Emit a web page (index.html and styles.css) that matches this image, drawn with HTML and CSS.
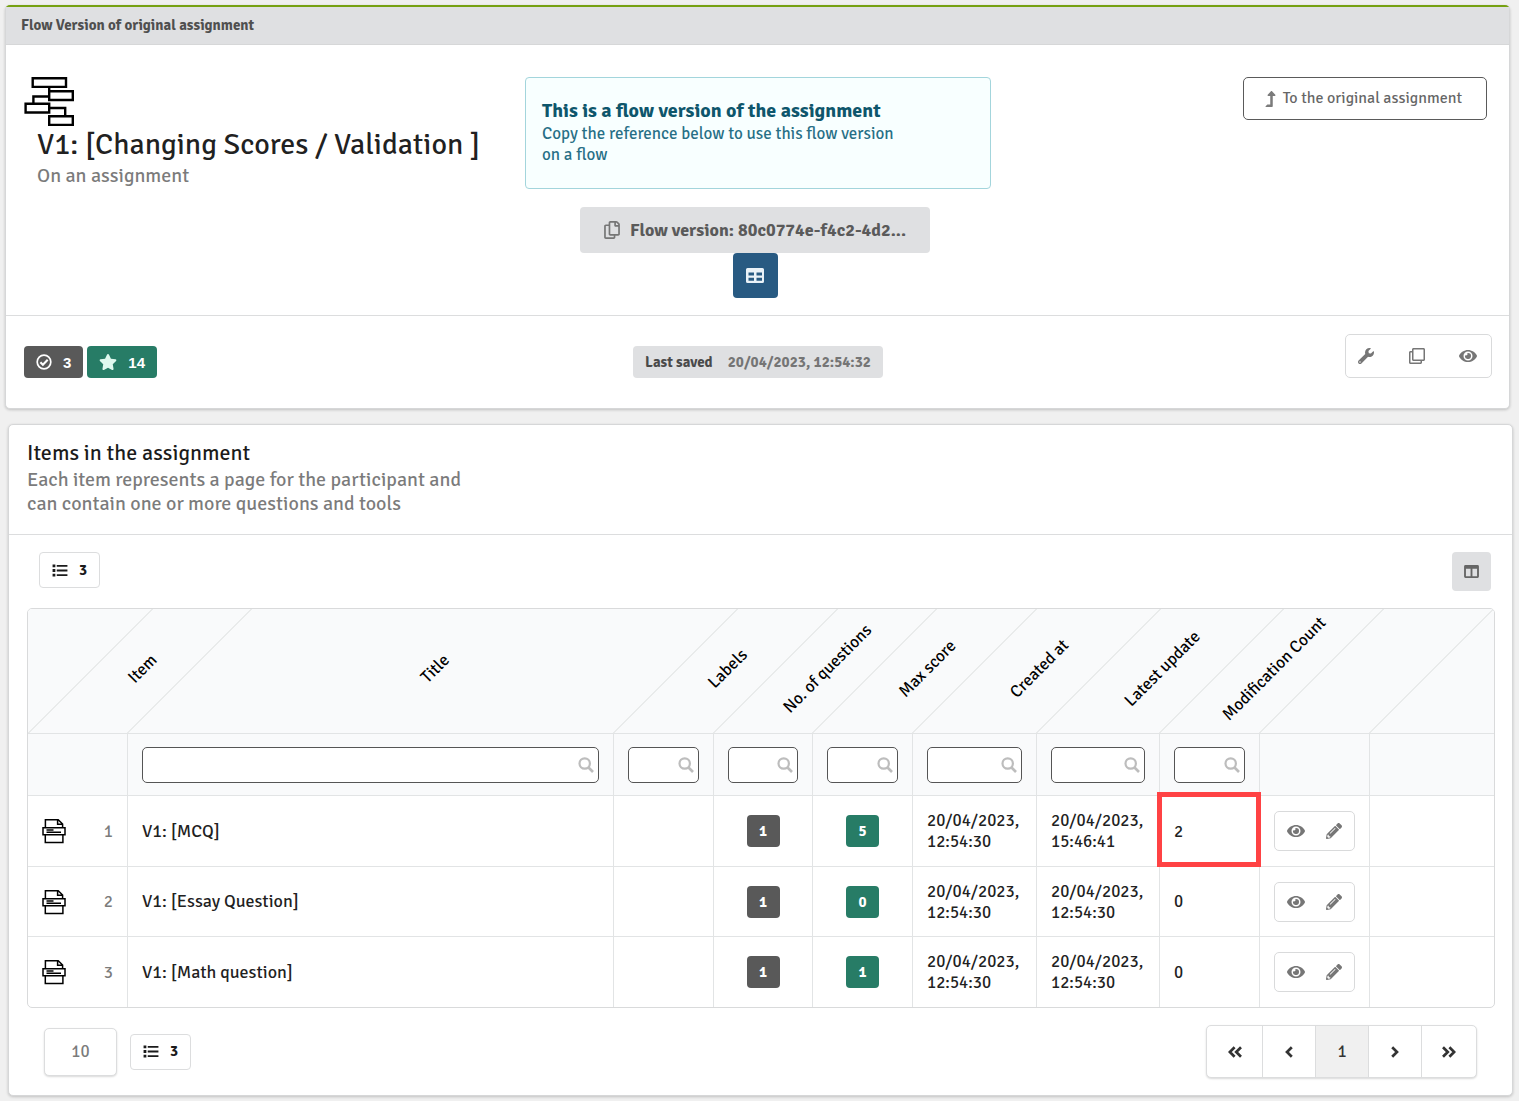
FILE: index.html
```html
<!DOCTYPE html>
<html lang="en">
<head>
<meta charset="utf-8">
<title>Flow version of assignment</title>
<link rel="stylesheet" href="styles.css">
</head>
<body>
<svg class="sprite" aria-hidden="true">
  <symbol id="i-up" viewBox="0 0 320 512"><path d="M313.553 119.669L209.587 7.666c-9.485-10.214-25.676-10.229-35.174 0L70.438 119.669C56.232 134.969 67.062 160 88.025 160H152v272H68.024a11.996 11.996 0 0 0-8.485 3.515l-56 56C-4.021 499.074 1.333 512 12.024 512H208c13.255 0 24-10.745 24-24V160h63.966c20.878 0 31.851-24.969 17.587-40.331z"/></symbol>
  <symbol id="i-eye" viewBox="0 0 576 512"><path d="M572.52 241.4C518.29 135.59 410.93 64 288 64S57.68 135.64 3.48 241.41a32.35 32.35 0 0 0 0 29.19C57.71 376.41 165.07 448 288 448s230.32-71.64 284.52-177.41a32.35 32.35 0 0 0 0-29.19zM288 400a144 144 0 1 1 144-144 143.93 143.93 0 0 1-144 144zm0-240a95.31 95.31 0 0 0-25.31 3.79 47.85 47.85 0 0 1-66.9 66.9A95.78 95.78 0 1 0 288 160z"/></symbol>
  <symbol id="i-pencil" viewBox="0 0 512 512"><path d="M497.9 142.1l-46.1 46.1c-4.7 4.7-12.3 4.7-17 0l-111-111c-4.7-4.7-4.7-12.3 0-17l46.1-46.1c18.7-18.7 49.1-18.7 67.9 0l60.1 60.1c18.8 18.7 18.8 49.1 0 67.9zM284.2 99.8L21.6 362.4.4 483.9c-2.9 16.4 11.4 30.6 27.8 27.8l121.5-21.3 262.6-262.6c4.7-4.7 4.7-12.3 0-17l-111-111c-4.8-4.7-12.4-4.7-17.1 0zM124.1 339.9c-5.5-5.5-5.5-14.3 0-19.8l154-154c5.5-5.5 14.3-5.5 19.8 0s5.5 14.3 0 19.8l-154 154c-5.5 5.5-14.3 5.5-19.8 0zM88 424h48v36.3l-64.5 11.3-31.1-31.1L51.7 376H88v48z"/></symbol>
  <symbol id="i-wrench" viewBox="0 0 512 512"><path d="M507.73 109.1c-2.24-9.03-13.54-12.09-20.12-5.51l-74.36 74.36-67.88-11.31-11.31-67.88 74.36-74.36c6.62-6.62 3.43-17.9-5.66-20.16-47.38-11.74-99.55.91-136.58 37.93-39.64 39.64-50.55 97.1-34.05 147.2L18.74 402.76c-24.99 24.99-24.99 65.51 0 90.5 24.99 24.99 65.51 24.99 90.5 0l213.21-213.21c50.12 16.71 107.47 5.68 147.37-34.22 37.07-37.07 49.7-89.32 37.91-136.73zM64 472c-13.25 0-24-10.75-24-24 0-13.26 10.75-24 24-24s24 10.74 24 24c0 13.25-10.75 24-24 24z"/></symbol>
  <symbol id="i-clone" viewBox="0 0 512 512"><path d="M464 0H144c-26.51 0-48 21.49-48 48v48H48c-26.51 0-48 21.49-48 48v320c0 26.51 21.49 48 48 48h320c26.51 0 48-21.49 48-48v-48h48c26.51 0 48-21.49 48-48V48c0-26.51-21.49-48-48-48zM362 464H54a6 6 0 0 1-6-6V150a6 6 0 0 1 6-6h42v224c0 26.51 21.49 48 48 48h224v42a6 6 0 0 1-6 6zm96-96H150a6 6 0 0 1-6-6V54a6 6 0 0 1 6-6h308a6 6 0 0 1 6 6v308a6 6 0 0 1-6 6z"/></symbol>
  <symbol id="i-copy" viewBox="0 0 448 512"><path d="M433.941 65.941l-51.882-51.882A48 48 0 0 0 348.118 0H176c-26.51 0-48 21.49-48 48v48H48c-26.51 0-48 21.49-48 48v320c0 26.51 21.49 48 48 48h224c26.51 0 48-21.49 48-48v-48h80c26.51 0 48-21.49 48-48V99.882a48 48 0 0 0-14.059-33.941zM266 464H54a6 6 0 0 1-6-6V150a6 6 0 0 1 6-6h74v224c0 26.51 21.49 48 48 48h96v42a6 6 0 0 1-6 6zm128-96H182a6 6 0 0 1-6-6V54a6 6 0 0 1 6-6h106v88c0 13.255 10.745 24 24 24h88v202a6 6 0 0 1-6 6zm6-256h-64V48h9.632c1.591 0 3.117.632 4.243 1.757l48.368 48.368a6 6 0 0 1 1.757 4.243V112z"/></symbol>
  <symbol id="i-star" viewBox="0 0 576 512"><path d="M259.3 17.8L194 150.2 47.9 171.5c-26.2 3.8-36.7 36.1-17.7 54.6l105.7 103-25 145.5c-4.5 26.3 23.2 46 46.4 33.7L288 439.6l130.7 68.7c23.2 12.2 50.9-7.4 46.4-33.7l-25-145.5 105.7-103c19-18.5 8.5-50.8-17.7-54.6L382 150.2 316.7 17.8c-11.7-23.6-45.6-23.9-57.4 0z"/></symbol>
  <symbol id="i-check" viewBox="0 0 16 16"><g fill="none" stroke="currentColor" stroke-width="1.7"><circle cx="8" cy="8" r="6.8"/><path d="M4.4 8.2l2.5 2.5 4.8-4.9" stroke-width="2.1"/></g></symbol>
  <symbol id="i-table" viewBox="0 0 20 18"><path fill-rule="evenodd" d="M2.500 1h15A1.500 1.500 0 0 1 19 2.500v12a1.500 1.500 0 0 1-1.500 1.500h-15A1.500 1.500 0 0 1 1 14.500v-12A1.500 1.500 0 0 1 2.500 1zM3.500 5.500v3H9v-3zM11.500 5.500v3H17v-3zM3.500 10.800v3H9v-3zM11.500 10.800v3H17v-3z"/></symbol>
  <symbol id="i-columns" viewBox="0 0 16 14"><path fill-rule="evenodd" d="M1.500 0h13A1.500 1.500 0 0 1 16 1.500v11a1.500 1.500 0 0 1-1.500 1.500h-13A1.500 1.500 0 0 1 0 12.500v-11A1.500 1.500 0 0 1 1.500 0zM2 4v8h5V4zM9 4v8h5V4z"/></symbol>
  <symbol id="i-list" viewBox="0 0 16 14"><path d="M0 .5h3v3H0zM0 5.500h3v3H0zM0 10.500h3v3H0zM4.500 1H16v2H4.500zM4.500 6H16v2H4.500zM4.500 11H16v2H4.500z"/></symbol>
  <symbol id="i-search" viewBox="0 0 16 16"><g fill="none" stroke="currentColor"><circle cx="6.700" cy="6.500" r="5.200" stroke-width="2.200"/><path d="M10.500 10.500l4.500 4.500" stroke-width="2.600"/></g></symbol>
  <symbol id="i-left" viewBox="0 0 8 12"><path d="M6.800 1.200L2 6l4.800 4.800" fill="none" stroke="currentColor" stroke-width="2.700"/></symbol>
  <symbol id="i-right" viewBox="0 0 8 12"><path d="M1.200 1.200L6 6l-4.800 4.800" fill="none" stroke="currentColor" stroke-width="2.700"/></symbol>
  <symbol id="i-left2" viewBox="0 0 14 12"><path d="M6.600 1.200L1.800 6l4.800 4.800M13 1.200L8.200 6l4.800 4.800" fill="none" stroke="currentColor" stroke-width="2.700"/></symbol>
  <symbol id="i-right2" viewBox="0 0 14 12"><path d="M1 1.200L5.800 6 1 10.800M7.400 1.200L12.200 6l-4.800 4.800" fill="none" stroke="currentColor" stroke-width="2.700"/></symbol>
  <symbol id="i-flow" viewBox="0 0 50 50"><g fill="none" stroke="#000" stroke-width="2.400"><path d="M8.700 1.200h33.300v8.700H8.700zM25.200 14.300h23.600v8.700H25.200zM1.600 26.800h23.600v8.700H1.600zM25.200 39.200h23.600v8.700H25.200zM25.200 10v5M9.400 26.500v-7h16M25 31h16.200v8.500"/></g></symbol>
  <symbol id="i-item" viewBox="0 0 24 26"><g fill="none" stroke="#000" stroke-width="1.500"><path d="M3.400 9.500V1.700h12.800l4.400 4.300v3.500M15.600 1.700v4.600h5M1 9.700h22v7H1zM3.300 16.700v7.700h17.600v-7.700M4.500 12h7M4.500 14.200h14.500"/></g></symbol>
</svg>

<main>
  <section class="card card-flow">
    <div class="ribbon">Flow Version of original assignment</div>
    <div class="overview">
      <div class="identity">
        <svg class="flow-icon"><use href="#i-flow"/></svg>
        <h1>V1: [Changing Scores / Validation ]</h1>
        <p>On an assignment</p>
      </div>
      <div class="reference">
        <div class="notice">
          <h2>This is a flow version of the assignment</h2>
          <p>Copy the reference below to use this flow version on a flow</p>
        </div>
        <div class="reference-actions">
          <button class="copy-btn" type="button"><svg class="icon-copy"><use href="#i-copy"/></svg>Flow version: 80c0774e-f4c2-4d2...</button>
          <button class="table-btn" type="button" aria-label="Show table"><svg class="icon-table"><use href="#i-table"/></svg></button>
        </div>
      </div>
      <div class="origin">
        <a class="origin-link" href="#"><svg class="icon-up"><use href="#i-up"/></svg>To the original assignment</a>
      </div>
    </div>
    <div class="status">
      <div class="counts">
        <span class="count dark"><svg class="icon-16"><use href="#i-check"/></svg>3</span>
        <span class="count green"><svg class="icon-18"><use href="#i-star"/></svg>14</span>
      </div>
      <div class="saved"><span>Last saved</span><time>20/04/2023, 12:54:32</time></div>
      <div class="tools-wrap">
        <div class="tools">
          <button type="button" aria-label="Settings"><svg class="icon-16"><use href="#i-wrench"/></svg></button>
          <button type="button" aria-label="Duplicate"><svg class="icon-16"><use href="#i-clone"/></svg></button>
          <button type="button" aria-label="Preview"><svg class="icon-18"><use href="#i-eye"/></svg></button>
        </div>
      </div>
    </div>
  </section>

  <section class="card card-items">
    <header class="items-head">
      <h2>Items in the assignment</h2>
      <p>Each item represents a page for the participant and can contain one or more questions and tools</p>
    </header>
    <div class="items-body">
      <div class="toolbar">
        <span class="total"><svg class="icon-list"><use href="#i-list"/></svg>3</span>
        <button class="columns-btn" type="button" aria-label="Columns"><svg class="icon-columns"><use href="#i-columns"/></svg></button>
      </div>
      <div class="table-frame">
        <table>
          <colgroup>
            <col class="w-99"><col><col class="w-100"><col class="w-99"><col class="w-100"><col class="w-124"><col class="w-123"><col class="w-100"><col class="w-110"><col class="w-125">
          </colgroup>
          <thead>
            <tr class="slanted">
              <th scope="col"><div><span>Item</span></div></th>
              <th scope="col"><div><span>Title</span></div></th>
              <th scope="col"><div><span>Labels</span></div></th>
              <th scope="col"><div><span>No. of questions</span></div></th>
              <th scope="col"><div><span>Max score</span></div></th>
              <th scope="col"><div><span>Created at</span></div></th>
              <th scope="col"><div><span>Latest update</span></div></th>
              <th scope="col"><div><span>Modification Count</span></div></th>
              <td><div></div></td>
              <td><div></div></td>
            </tr>
            <tr class="filters">
              <td></td>
              <td><label class="filter"><input type="text" aria-label="Filter title"><svg class="icon-16"><use href="#i-search"/></svg></label></td>
              <td><label class="filter"><input type="text" aria-label="Filter labels"><svg class="icon-16"><use href="#i-search"/></svg></label></td>
              <td><label class="filter"><input type="text" aria-label="Filter number of questions"><svg class="icon-16"><use href="#i-search"/></svg></label></td>
              <td><label class="filter"><input type="text" aria-label="Filter max score"><svg class="icon-16"><use href="#i-search"/></svg></label></td>
              <td><label class="filter"><input type="text" aria-label="Filter created at"><svg class="icon-16"><use href="#i-search"/></svg></label></td>
              <td><label class="filter"><input type="text" aria-label="Filter latest update"><svg class="icon-16"><use href="#i-search"/></svg></label></td>
              <td><label class="filter"><input type="text" aria-label="Filter modification count"><svg class="icon-16"><use href="#i-search"/></svg></label></td>
              <td></td>
              <td></td>
            </tr>
          </thead>
          <tbody>
            <tr>
              <td><div class="item-no"><svg class="icon-item"><use href="#i-item"/></svg>1</div></td>
              <td class="title">V1: [MCQ]</td>
              <td></td>
              <td class="mid"><span class="badge dark">1</span></td>
              <td class="mid"><span class="badge green">5</span></td>
              <td>20/04/2023, 12:54:30</td>
              <td>20/04/2023, 15:46:41</td>
              <td class="marked">2</td>
              <td><div class="row-tools"><button type="button" aria-label="Preview"><svg class="icon-18"><use href="#i-eye"/></svg></button><button type="button" aria-label="Edit"><svg class="icon-16"><use href="#i-pencil"/></svg></button></div></td>
              <td></td>
            </tr>
            <tr>
              <td><div class="item-no"><svg class="icon-item"><use href="#i-item"/></svg>2</div></td>
              <td class="title">V1: [Essay Question]</td>
              <td></td>
              <td class="mid"><span class="badge dark">1</span></td>
              <td class="mid"><span class="badge green">0</span></td>
              <td>20/04/2023, 12:54:30</td>
              <td>20/04/2023, 12:54:30</td>
              <td>0</td>
              <td><div class="row-tools"><button type="button" aria-label="Preview"><svg class="icon-18"><use href="#i-eye"/></svg></button><button type="button" aria-label="Edit"><svg class="icon-16"><use href="#i-pencil"/></svg></button></div></td>
              <td></td>
            </tr>
            <tr>
              <td><div class="item-no"><svg class="icon-item"><use href="#i-item"/></svg>3</div></td>
              <td class="title">V1: [Math question]</td>
              <td></td>
              <td class="mid"><span class="badge dark">1</span></td>
              <td class="mid"><span class="badge green">1</span></td>
              <td>20/04/2023, 12:54:30</td>
              <td>20/04/2023, 12:54:30</td>
              <td>0</td>
              <td><div class="row-tools"><button type="button" aria-label="Preview"><svg class="icon-18"><use href="#i-eye"/></svg></button><button type="button" aria-label="Edit"><svg class="icon-16"><use href="#i-pencil"/></svg></button></div></td>
              <td></td>
            </tr>
          </tbody>
        </table>
      </div>
      <footer class="items-foot">
        <div class="foot-left">
          <button class="page-size" type="button">10</button>
          <span class="total"><svg class="icon-list"><use href="#i-list"/></svg>3</span>
        </div>
        <nav class="pager" aria-label="Pages">
          <a href="#" aria-label="First page"><svg class="icon-dbl"><use href="#i-left2"/></svg></a>
          <a href="#" aria-label="Previous page"><svg class="icon-sgl"><use href="#i-left"/></svg></a>
          <a href="#" class="current" aria-current="page">1</a>
          <a href="#" aria-label="Next page"><svg class="icon-sgl"><use href="#i-right"/></svg></a>
          <a href="#" aria-label="Last page"><svg class="icon-dbl"><use href="#i-right2"/></svg></a>
        </nav>
      </footer>
    </div>
  </section>
</main>
</body>
</html>
```
FILE: styles.css
```css
* { box-sizing: border-box; }

body {
  margin: 0;
  background: #f0f0f0;
  color: #212121;
  font-family: "Signika Negative", Roboto, "Noto Sans", sans-serif;
  font-size: 17px;
  line-height: 21px;
}

h1, h2, p { margin: 0; font-weight: 400; }
button, input { font: inherit; color: inherit; }
button { cursor: pointer; }
a { color: inherit; text-decoration: none; }
svg { display: block; flex: none; fill: currentColor; }

.sprite { position: absolute; width: 0; height: 0; }
.icon-16 { width: 16px; height: 16px; }
.icon-18 { width: 18px; height: 16px; }
.icon-up { width: 11px; height: 16px; }
.icon-copy { width: 16px; height: 18px; }
.icon-table { width: 20px; height: 18px; }
.icon-list { width: 16px; height: 13px; }
.icon-columns { width: 15px; height: 13px; }
.icon-dbl { width: 14px; height: 12px; }
.icon-sgl { width: 8px; height: 12px; }
.icon-item { width: 24px; height: 26px; }

main { display: flex; flex-direction: column; gap: 15px; padding: 5px 6px 5px 5px; }

.card {
  background: #fff;
  border: 1px solid #d6d7d8;
  border-radius: 5px;
  box-shadow: 0 1px 3px rgba(0, 0, 0, .2);
}

/* Flow version card */
.card-flow { margin-right: 3px; border-top: 2px solid #76a112; }

.ribbon {
  padding: 8px 15px;
  background: #dfe0e2;
  border-bottom: 1px solid #d6d7d8;
  color: #4f4f4f;
  font-size: 15px;
  font-weight: 700;
}

.overview, .status { display: grid; grid-template-columns: repeat(3, minmax(0, 1fr)); }
.overview { padding: 32px 0 17px; }

.identity { padding-left: 18px; }
.flow-icon { width: 50px; height: 50px; }
.identity h1 { padding-left: 13px; font-size: 30px; line-height: 36px; white-space: nowrap; }
.identity p { padding-left: 13px; color: #7b7b7b; font-size: 20px; line-height: 26px; }

.reference { padding: 0 17px 0 18px; }
.notice {
  min-height: 112px;
  padding: 21px 80px 20px 16px;
  background: #f8ffff;
  border: 1px solid #a3d5dc;
  border-radius: 4px;
  color: #276f86;
}
.notice h2 { color: #0e566c; font-size: 20px; font-weight: 700; line-height: 24px; white-space: nowrap; }

.reference-actions {
  display: flex;
  flex-direction: column;
  align-items: center;
  padding: 18px 6px 0 0;
}
.copy-btn, .table-btn { display: flex; align-items: center; justify-content: center; border: 0; border-radius: 4px; }
.copy-btn {
  gap: 10px;
  width: 350px;
  height: 46px;
  background: #dfe0e2;
  color: #5a5a5a;
  font-size: 18px;
  font-weight: 700;
  white-space: nowrap;
}
.copy-btn svg { color: #767676; }
.table-btn { width: 45px; height: 45px; padding: 0; background: #285a82; color: #eaf2f8; }

.origin { display: flex; justify-content: flex-end; align-items: flex-start; padding-right: 22px; }
.origin-link {
  display: flex;
  align-items: center;
  gap: 7px;
  height: 43px;
  padding: 0 24px 0 21px;
  border: 1px solid #5a5a5a;
  border-radius: 5px;
  color: #666;
  font-size: 16px;
}
.origin-link svg { color: #7b7b7b; }

.status { padding: 18px 17px 30px 18px; border-top: 1px solid #dcddde; }
.counts, .saved { display: flex; margin-top: 12px; }
.counts { gap: 4px; }
.count {
  display: flex;
  align-items: center;
  gap: 11px;
  height: 32px;
  padding: 0 12px;
  border-radius: 4px;
  color: #fff;
  font-family: "Liberation Sans", Arial, sans-serif;
  font-size: 15px;
  font-weight: 700;
}
.dark { background: #595959; }
.green { background: #277c66; }
.count.green svg { color: #dff8ee; }

.saved {
  justify-self: center;
  align-items: center;
  gap: 15px;
  height: 32px;
  padding: 0 12px;
  background: #dfe0e2;
  border-radius: 4px;
  color: #4a4a4a;
  font-size: 15px;
  font-weight: 700;
  white-space: nowrap;
}
.saved time { color: #757575; }

.tools-wrap { display: flex; justify-content: flex-end; }
.tools, .row-tools { display: flex; justify-content: space-between; border: 1px solid #d9dadb; border-radius: 5px; color: #767676; }
.tools { width: 147px; height: 44px; padding: 0 14px 0 12px; }
.tools button, .row-tools button { display: flex; align-items: center; padding: 0; border: 0; background: none; }

/* Items card */
.card-items { margin-left: 3px; }
.items-head { padding: 13px 18px 18px; border-bottom: 1px solid #dcddde; }
.items-head h2 { color: #1b1b1b; font-size: 22px; line-height: 30px; }
.items-head p { max-width: 460px; color: #7b7b7b; font-size: 20px; line-height: 24px; }

.items-body { padding: 17px 17px 17px 18px; }
.toolbar { display: flex; justify-content: space-between; align-items: flex-start; padding: 0 4px 17px 12px; }
.total {
  display: flex;
  align-items: center;
  gap: 11px;
  height: 36px;
  padding: 0 12px;
  border: 1px solid #dcddde;
  border-radius: 4px;
  color: #1b1b1b;
  font-size: 15px;
  font-weight: 700;
}
.columns-btn {
  display: flex;
  align-items: center;
  justify-content: center;
  width: 39px;
  height: 39px;
  padding: 0;
  border: 0;
  border-radius: 4px;
  background: #dfe0e2;
  color: #666;
}

.table-frame { overflow: hidden; border: 1px solid #d9dadb; border-radius: 5px; }
table { width: 100%; table-layout: fixed; border-spacing: 0; }
.w-99 { width: 99px; }
.w-100 { width: 100px; }
.w-110 { width: 110px; }
.w-123 { width: 123px; }
.w-124 { width: 124px; }
.w-125 { width: 125px; }

td, th { padding: 0 14px; text-align: left; font-weight: 400; }
tbody td, .filters td { border-top: 1px solid #e2e4e5; }
tbody td + td, .filters td + td { border-left: 1px solid #e2e4e5; }
thead tr > * { background: #f9fafb; }
tbody td { height: 71px; }
tbody tr:nth-child(even) td { height: 70px; }
tbody .title { font-size: 18px; }

.slanted > * { height: 124px; padding: 0; background: none; }
.slanted { background: #f9fafb; }
.slanted div {
  position: relative;
  display: flex;
  align-items: center;
  justify-content: center;
  height: 124px;
}
.slanted div::before {
  content: "";
  position: absolute;
  inset: 0;
  border-left: 1px solid #d9dbdc;
  transform: skewX(-45deg);
  transform-origin: left bottom;
}
.slanted span { color: #000; white-space: nowrap; transform: translate(65px, -3px) rotate(-45deg); }

.filters td { height: 62px; }
.filter { display: grid; align-items: center; }
.filter > * { grid-area: 1 / 1; }
.filter input {
  width: 100%;
  min-width: 0;
  height: 36px;
  padding: 0 28px 0 10px;
  border: 1px solid #555;
  border-radius: 5px;
  background: #fff;
}
.filter svg { justify-self: end; margin-right: 5px; color: #bdbdbd; }

.item-no { display: flex; align-items: center; justify-content: space-between; color: #7b7b7b; }
.mid { text-align: center; }
.badge {
  display: inline-block;
  width: 33px;
  border-radius: 4px;
  color: #fff;
  font-size: 15px;
  font-weight: 700;
  line-height: 32px;
  vertical-align: middle;
}
.row-tools { width: 81px; height: 40px; padding: 0 12px; }

/* Callout round the changed count */
.marked { position: relative; }
.marked::after {
  content: "";
  position: absolute;
  inset: -4px -2px -1px -3px;
  z-index: 1;
  border: 5px solid #ff4244;
}

.items-foot { display: flex; justify-content: space-between; align-items: center; padding: 17px 18px 0 17px; }
.foot-left { display: flex; align-items: center; gap: 13px; }
.page-size, .pager { border: 1px solid #dcddde; border-radius: 5px; background: #fff; box-shadow: 0 1px 2px rgba(0, 0, 0, .15); }
.page-size { width: 73px; height: 48px; color: #7b7b7b; }
.pager { display: flex; overflow: hidden; height: 53px; color: #333; }
.pager a { display: flex; align-items: center; justify-content: center; width: 53px; }
.pager a:first-child, .pager a:last-child { width: 55px; }
.pager a + a { border-left: 1px solid #dcddde; }
.pager .current { background: #f0f0f0; }
```
